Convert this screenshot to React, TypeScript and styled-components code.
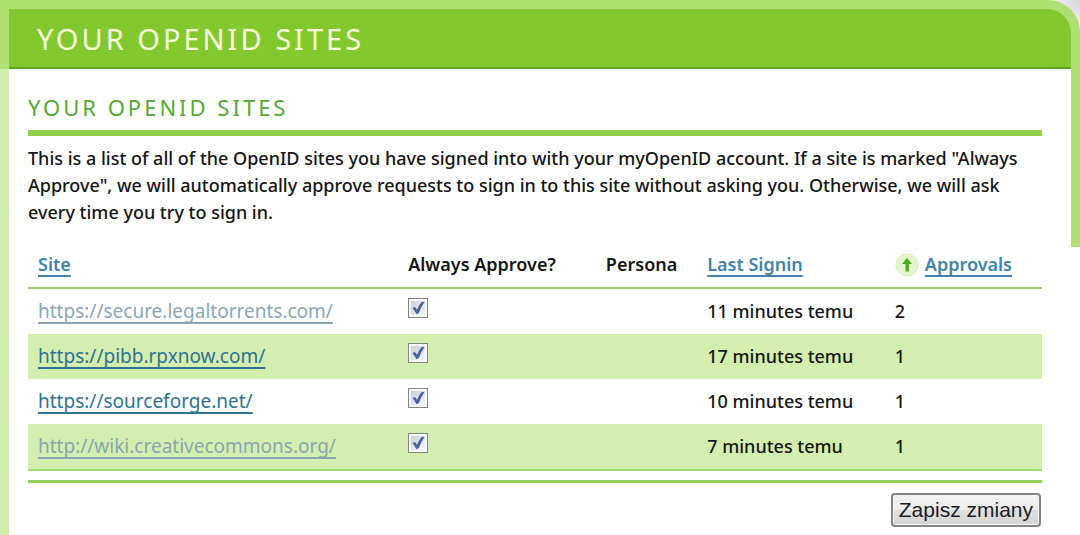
import React, { useState } from "react";
import styled, { createGlobalStyle } from "styled-components";

const GlobalStyle = createGlobalStyle`
  * { box-sizing: border-box; }
  body {
    margin: 0;
    background: #fff;
    color: #151515;
    font-family: "Noto Sans", "Open Sans", sans-serif;
    font-size: 18px;
    line-height: 27px;
  }
`;

const Backdrop = styled.div`
  background: radial-gradient(circle 40px at 100% 0, #d6d4da, #fff);
`;

const Frame = styled.div`
  min-height: 100vh;
  padding: 9px 9px 0;
  border-top-right-radius: 32px;
  background:
    linear-gradient(#b0e073, #b0e073) 0 0 / 100% 69px no-repeat,
    linear-gradient(#b0e073, #b0e073) 100% 0 / 9px 247px no-repeat,
    linear-gradient(#d0eeab, #d0eeab) 0 0 / 9px 100% no-repeat,
    #fff;
`;

const Banner = styled.header`
  padding: 9px 28px 7px;
  border-bottom: 2px solid #57a51c;
  border-top-right-radius: 24px;
  background: #82c92f;
`;

const BannerTitle = styled.h1`
  margin: 0;
  color: #fbffdc;
  font-size: 29px;
  font-weight: 400;
  line-height: 42px;
  letter-spacing: 3px;
  text-transform: uppercase;
`;

const Content = styled.main`
  padding: 22px 29px 8px 19px;
`;

const SectionTitle = styled.h2`
  margin: 0 0 9px;
  padding-bottom: 6px;
  border-bottom: 6px solid #92d04a;
  color: #56a832;
  font-size: 22px;
  font-weight: 400;
  line-height: 33px;
  letter-spacing: 3px;
  text-transform: uppercase;
`;

const Intro = styled.p`
  margin: 0 0 15px;
  font-weight: 500;
`;

const SiteTable = styled.table`
  width: 100%;
  table-layout: fixed;
  border-collapse: collapse;
  border-bottom: 2px solid #a3d870;
`;

const Column = styled.col<{ $share: string }>`
  width: ${(p) => p.$share};
`;

const HeadCell = styled.th`
  padding: 10px 0 9px 10px;
  border-bottom: 2px solid #9fce68;
  font-weight: 600;
  text-align: left;
  white-space: nowrap;
`;

const Row = styled.tr`
  &:nth-child(even) { background: #d3eeae; }
`;

const Cell = styled.td`
  height: 45px;
  padding: 9px 0 9px 10px;
  font-weight: 500;
  vertical-align: top;
  white-space: nowrap;
`;

const TextLink = styled.a<{ $muted?: boolean }>`
  color: ${(p) => (p.$muted ? "#8da5b2" : "#2f7396")};
  text-decoration: underline;
  text-decoration-thickness: 2px;
  text-underline-offset: 4px;
  text-decoration-skip-ink: none;
`;

const SiteLink = styled(TextLink)`
  font-size: 19px;
  font-weight: 400;
`;

const SortLink = styled(TextLink)`
  color: #4382a9;
`;

const SortHeading = styled.span`
  display: flex;
  align-items: center;
  gap: 6px;
`;

const Tick = styled.label`
  position: relative;
  display: block;
  width: 20px;
  height: 20px;
`;

const TickBox = styled.input`
  display: block;
  width: 20px;
  height: 20px;
  margin: 0;
  appearance: none;
  border: 1px solid #858585;
  background: linear-gradient(135deg, #cbd0dc, #f4f6fa) 50% 50% / 14px 14px no-repeat #f6f7f7;

  &:checked + svg { visibility: visible; }
`;

const TickMark = styled.svg`
  position: absolute;
  inset: 0;
  visibility: hidden;
  pointer-events: none;
`;

const Actions = styled.div`
  display: flex;
  justify-content: flex-end;
  margin-top: 9px;
  padding: 10px 1px 0;
  border-top: 3px solid #97cf5c;
`;

const SaveButton = styled.button`
  height: 34px;
  padding: 0 6px;
  border: 2px solid #858585;
  border-radius: 4px;
  background: linear-gradient(#f3f3f3, #ebebeb 50%, #e0e0e0 51%, #d4d4d4);
  box-shadow: inset 0 0 0 1px #f4f4f4;
  color: #1c1c1c;
  font-family: "Liberation Sans", Arial, sans-serif;
  font-size: 21px;
  line-height: 28px;
  white-space: nowrap;
`;

type Site = { url: string; lastSignin: string; approvals: number; muted?: boolean };

const sites: Site[] = [
  { url: "https://secure.legaltorrents.com/", lastSignin: "11 minutes temu", approvals: 2, muted: true },
  { url: "https://pibb.rpxnow.com/", lastSignin: "17 minutes temu", approvals: 1 },
  { url: "https://sourceforge.net/", lastSignin: "10 minutes temu", approvals: 1 },
  { url: "http://wiki.creativecommons.org/", lastSignin: "7 minutes temu", approvals: 1, muted: true },
];

function SortIcon() {
  return (
    <svg width="24" height="24" viewBox="0 0 24 24" aria-hidden="true">
      <circle cx="12" cy="12" r="11" fill="#e3f6cd" stroke="#d8f1bb" />
      <path d="M12 5L17 11H14V18.500H10.500V11H7Z" fill="#51ad19" />
    </svg>
  );
}

function ApproveBox({ site }: { site: Site }) {
  const [checked, setChecked] = useState(true);
  return (
    <Tick>
      <TickBox
        type="checkbox"
        aria-label={`Always approve ${site.url}`}
        checked={checked}
        onChange={(e) => setChecked(e.target.checked)}
      />
      <TickMark width="20" height="20" viewBox="0 0 20 20" aria-hidden="true">
        <path d="M4.500 10L7 9L9 11.800Q11 6.500 14 3.800L16.500 4Q13 9 10.800 15L8.500 16.200Q6.500 12.500 4.500 10Z" fill="#4a64a2" />
      </TickMark>
    </Tick>
  );
}

export default function App() {
  return (
    <Backdrop>
      <GlobalStyle />
      <Frame>
        <Banner>
          <BannerTitle>Your OpenID Sites</BannerTitle>
        </Banner>
        <Content>
          <SectionTitle>Your OpenID Sites</SectionTitle>
          <Intro>
            This is a list of all of the OpenID sites you have signed into with your myOpenID
            account. If a site is marked "Always Approve", we will automatically approve requests
            to sign in to this site without asking you. Otherwise, we will ask every time you try
            to sign in.
          </Intro>
          <form onSubmit={(e) => e.preventDefault()}>
            <SiteTable>
              <colgroup>
                <Column $share="36.5%" />
                <Column $share="19.5%" />
                <Column $share="10%" />
                <Column $share="18.5%" />
                <Column $share="15.5%" />
              </colgroup>
              <thead>
                <tr>
                  <HeadCell scope="col"><SortLink href="#site">Site</SortLink></HeadCell>
                  <HeadCell scope="col">Always Approve?</HeadCell>
                  <HeadCell scope="col">Persona</HeadCell>
                  <HeadCell scope="col"><SortLink href="#signin">Last Signin</SortLink></HeadCell>
                  <HeadCell scope="col">
                    <SortHeading>
                      <SortIcon />
                      <SortLink href="#approvals">Approvals</SortLink>
                    </SortHeading>
                  </HeadCell>
                </tr>
              </thead>
              <tbody>
                {sites.map((site) => (
                  <Row key={site.url}>
                    <Cell><SiteLink href={site.url} $muted={site.muted}>{site.url}</SiteLink></Cell>
                    <Cell><ApproveBox site={site} /></Cell>
                    <Cell />
                    <Cell>{site.lastSignin}</Cell>
                    <Cell>{site.approvals}</Cell>
                  </Row>
                ))}
              </tbody>
            </SiteTable>
            <Actions>
              <SaveButton type="submit">Zapisz zmiany</SaveButton>
            </Actions>
          </form>
        </Content>
      </Frame>
    </Backdrop>
  );
}
